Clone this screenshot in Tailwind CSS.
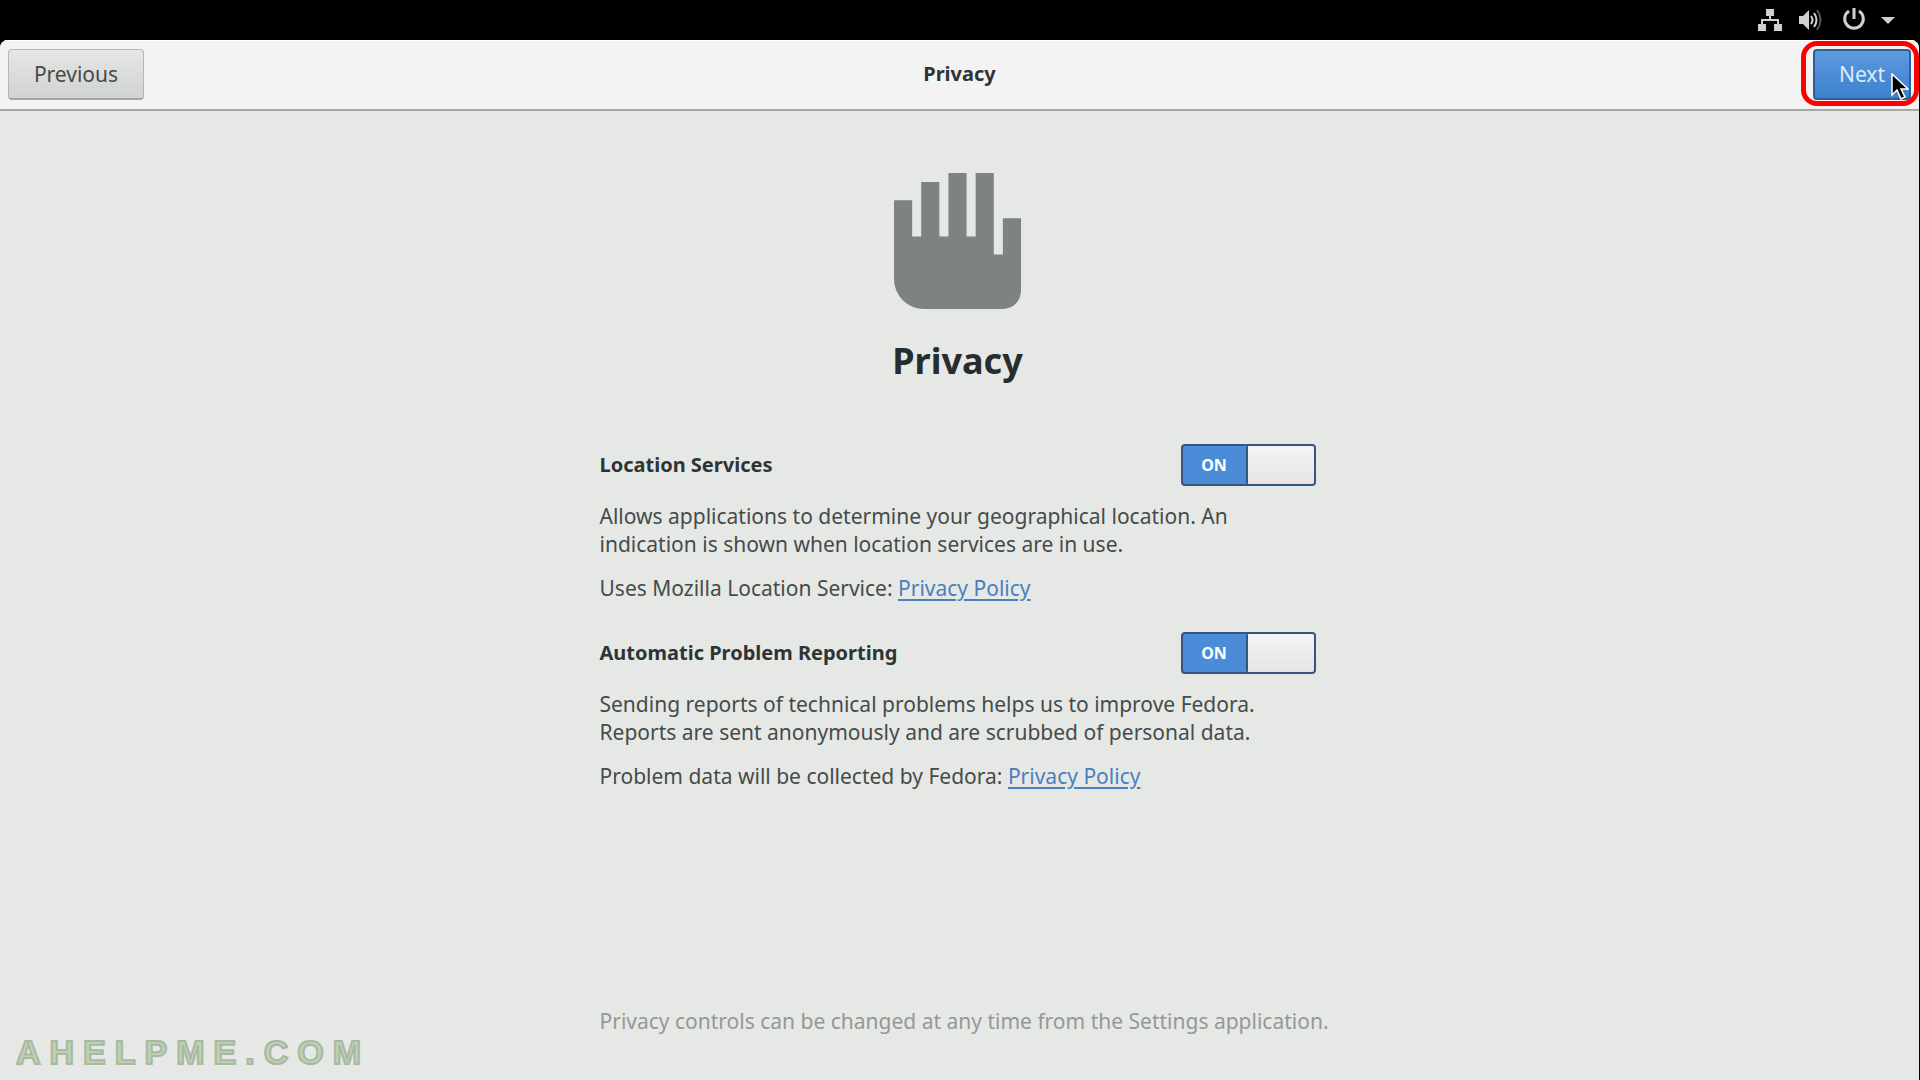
<!DOCTYPE html>
<html lang="en">
<head>
  <meta charset="UTF-8">
  <meta name="viewport" content="width=device-width, initial-scale=1.0">
  <title>Privacy</title>
  <script src="https://cdn.jsdelivr.net/npm/@tailwindcss/browser@4"></script>
</head>
<body class="bg-black font-['Noto_Sans',sans-serif] text-[21px] leading-7 text-[#454b4b] flex flex-col min-h-screen">
  <!-- Top bar -->
  <div class="h-10 shrink-0 flex items-center justify-end gap-4 pr-6 text-[#d0d0d0]">
    <svg class="w-6 h-6" viewBox="0 0 24 24" fill="currentColor" aria-label="Network">
      <path d="M8 1h8v7h-3v3h8v5h3v7h-8v-7h3v-3H5v3h3v7H0v-7h3v-5h8V8H8z"/>
    </svg>
    <svg class="w-6 h-6" viewBox="0 0 24 24" fill="none" stroke-width="2" aria-label="Volume">
      <path d="M1 8h4l6-6v20l-6-6H1z" fill="currentColor"/>
      <path d="M13 8q3 4 0 8" stroke="currentColor"/>
      <path d="M16 5q5 7 0 14" stroke="currentColor"/>
      <path d="M19 2q7 10 0 20" stroke="#555"/>
    </svg>
    <svg class="w-6 h-6 ml-1" viewBox="0 0 24 24" fill="none" stroke="currentColor" stroke-width="3" aria-label="Power">
      <path d="M7 3a9.300 9.300 0 1 0 10 0"/>
      <path d="M12 -1v12"/>
    </svg>
    <svg class="w-4 h-6 -ml-0.5" viewBox="0 0 16 24" fill="currentColor" aria-label="Menu">
      <path d="M1 9h14l-7 7z"/>
    </svg>
  </div>

  <!-- Setup window -->
  <div class="grow flex flex-col mr-px bg-[#e6e8e5] rounded-t-lg overflow-hidden">
    <header class="h-[71px] shrink-0 grid grid-cols-3 items-center px-2 pb-0.5 bg-[#f3f3f3] border-t border-t-white border-b-2 border-b-[#a6a8a2]">
      <button class="justify-self-start h-[51px] w-[136px] rounded-sm border border-[#b4b8b1] border-b-2 border-b-[#a2a5a0] bg-linear-to-b from-[#e5e7e4] to-[#d0d3cf]">Previous</button>
      <h1 class="text-center text-[20px] font-bold text-[#2e3436]">Privacy</h1>
      <div class="relative justify-self-end">
        <button class="h-[51px] w-[98px] rounded-sm border-2 border-[#2e5f97] bg-linear-to-b from-[#5c9ae0] to-[#3d80cc] text-[#dcebfa]">Next</button>
        <div class="absolute -top-2 -bottom-[6px] -left-3 -right-2 border-5 border-[#ff0000] rounded-2xl"></div>
        <!-- mouse pointer -->
        <svg class="absolute left-[78px] top-6 w-[18px] h-7" viewBox="0 0 18 28" fill="#000" stroke="#fff" stroke-width="1.500">
          <path d="M1 1v21l5-5 4 9 4-2-4-8h7z"/>
        </svg>
      </div>
    </header>

    <main class="grow flex justify-center pr-1">
      <div class="w-[716px] flex flex-col pt-[62px] pb-[45px]">
        <svg class="self-center w-[127px] h-[136px]" viewBox="0 0 14 15" preserveAspectRatio="none" fill="#7e8280" aria-hidden="true">
          <path d="M0 3h2v4h1V1h2v6h1V0h2v7h1V0h2v9h1V5h2v8a2 2 0 0 1-2 2H3.300A3.300 3.300 0 0 1 0 11.700z"/>
        </svg>
        <h2 class="mt-7 text-center text-[36px] leading-12 font-bold text-[#272d2e]">Privacy</h2>

        <section class="mt-[59px]">
          <div class="flex items-center justify-between">
            <label for="location" class="text-[20px] font-bold text-[#2e3436]">Location Services</label>
            <label class="flex w-[135px] h-[42px] rounded-sm border-2 border-[#34557d] bg-[#4a8cd8]">
              <input id="location" type="checkbox" role="switch" class="peer sr-only" checked>
              <span class="flex-1 self-center text-center text-[16px] font-bold text-white">ON</span>
              <span class="w-[68px] border-l-2 border-[#34557d] rounded-xs bg-linear-to-b from-[#f4f4f4] to-[#e6e5e4]"></span>
            </label>
          </div>
          <p class="mt-4">Allows applications to determine your geographical location. An<br>indication is shown when location services are in use.</p>
          <p class="mt-4">Uses Mozilla Location Service: <a href="#" class="text-[#4a7fbf] underline underline-offset-3 decoration-2">Privacy Policy</a></p>
        </section>

        <section class="mt-[30px]">
          <div class="flex items-center justify-between">
            <label for="reporting" class="text-[20px] font-bold text-[#2e3436]">Automatic Problem Reporting</label>
            <label class="flex w-[135px] h-[42px] rounded-sm border-2 border-[#34557d] bg-[#4a8cd8]">
              <input id="reporting" type="checkbox" role="switch" class="peer sr-only" checked>
              <span class="flex-1 self-center text-center text-[16px] font-bold text-white">ON</span>
              <span class="w-[68px] border-l-2 border-[#34557d] rounded-xs bg-linear-to-b from-[#f4f4f4] to-[#e6e5e4]"></span>
            </label>
          </div>
          <p class="mt-4">Sending reports of technical problems helps us to improve Fedora.<br>Reports are sent anonymously and are scrubbed of personal data.</p>
          <p class="mt-4">Problem data will be collected by Fedora: <a href="#" class="text-[#4a7fbf] underline underline-offset-3 decoration-2">Privacy Policy</a></p>
        </section>

        <p class="mt-auto whitespace-nowrap text-[#949896]">Privacy controls can be changed at any time from the Settings application.</p>
      </div>
    </main>
  </div>

  <!-- Watermark -->
  <div class="absolute left-4 bottom-2 font-['Liberation_Sans',sans-serif] font-bold text-[34px] leading-10 tracking-[9px] text-[#b8d6ae] [-webkit-text-stroke:2px_#abb6a7]">AHELPME.COM</div>
</body>
</html>
